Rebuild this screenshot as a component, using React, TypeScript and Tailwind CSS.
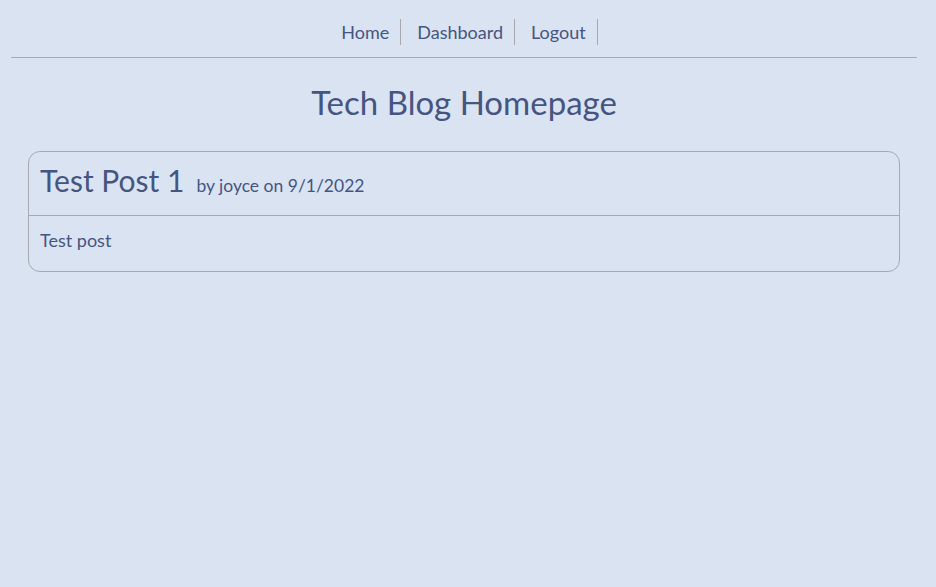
export default function App() {
  return (
    <div className="min-h-[587px] w-full bg-[#dae3f2] text-[#46557f]" style={{ fontFamily: "Lato, 'Noto Sans', sans-serif" }}>
      <div className="w-[928px]">
        <div className="px-[11px]">
          <nav className="flex justify-center border-b border-[#a7a9ad] pt-[19px] pb-[12px] pr-[4px]">
            <a className="border-r border-[#a7a9ad] pl-[15px] pr-[11px] text-[18px] leading-[26px]">Home</a>
            <a className="border-r border-[#a7a9ad] pl-[16px] pr-[11px] text-[18px] leading-[26px]">Dashboard</a>
            <a className="border-r border-[#a7a9ad] pl-[16px] pr-[11px] text-[18px] leading-[26px]">Logout</a>
          </nav>
        </div>
        <h1 className="mt-[24px] text-center text-[33px] leading-[40px]">Tech Blog Homepage</h1>
        <div className="mx-[28px] mt-[29px] rounded-[12px] border border-[#a7a9ad]">
          <div className="flex items-baseline gap-[12px] border-b border-[#a7a9ad] px-[11px] pt-[10px] pb-[16px]">
            <span className="text-[30px] leading-[36px]">Test Post 1</span>
            <span className="text-[17.5px]">by joyce on 9/1/2022</span>
          </div>
          <div className="px-[11px] pt-[13px] pb-[20px] text-[18px] leading-[22px]">Test post</div>
        </div>
      </div>
    </div>
  );
}
